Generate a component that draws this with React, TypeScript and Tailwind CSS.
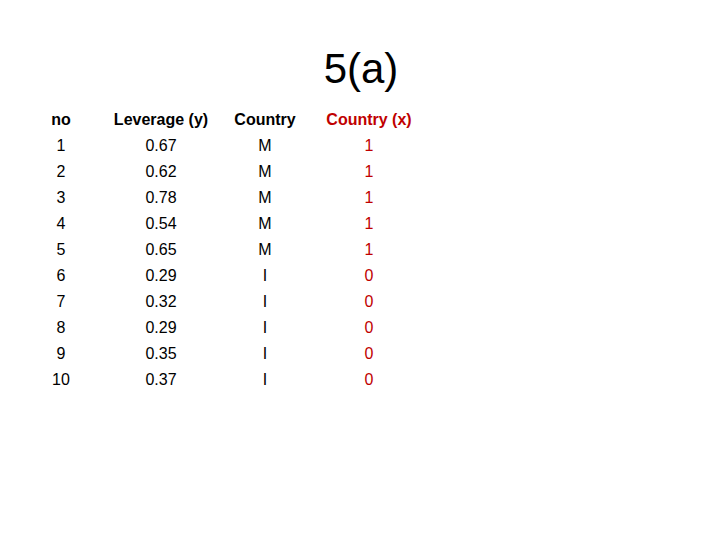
const rows: [string, string, string, string][] = [
  ["1", "0.67", "M", "1"],
  ["2", "0.62", "M", "1"],
  ["3", "0.78", "M", "1"],
  ["4", "0.54", "M", "1"],
  ["5", "0.65", "M", "1"],
  ["6", "0.29", "I", "0"],
  ["7", "0.32", "I", "0"],
  ["8", "0.29", "I", "0"],
  ["9", "0.35", "I", "0"],
  ["10", "0.37", "I", "0"],
];

export default function App() {
  return (
    <div
      className="w-[720px] h-[540px] bg-white text-black"
      style={{ fontFamily: '"Liberation Sans", Arial, sans-serif' }}
    >
      <h1 className="pt-[45px] text-center text-[42px] leading-[48px] font-normal pl-[2px]">5(a)</h1>

      <div className="mt-[14px] pl-[11px] text-[16px]">
        <div className="flex h-[26px] items-center font-bold">
          <div className="w-[100px] text-center">no</div>
          <div className="w-[100px] text-center">Leverage (y)</div>
          <div className="w-[108px] text-center">Country</div>
          <div className="w-[100px] text-center text-[#c00000]">Country (x)</div>
        </div>
        {rows.map((r) => (
          <div key={r[0]} className="flex h-[26px] items-center">
            <div className="w-[100px] text-center">{r[0]}</div>
            <div className="w-[100px] text-center">{r[1]}</div>
            <div className="w-[108px] text-center">{r[2]}</div>
            <div className="w-[100px] text-center text-[#c00000]">{r[3]}</div>
          </div>
        ))}
      </div>
    </div>
  );
}
